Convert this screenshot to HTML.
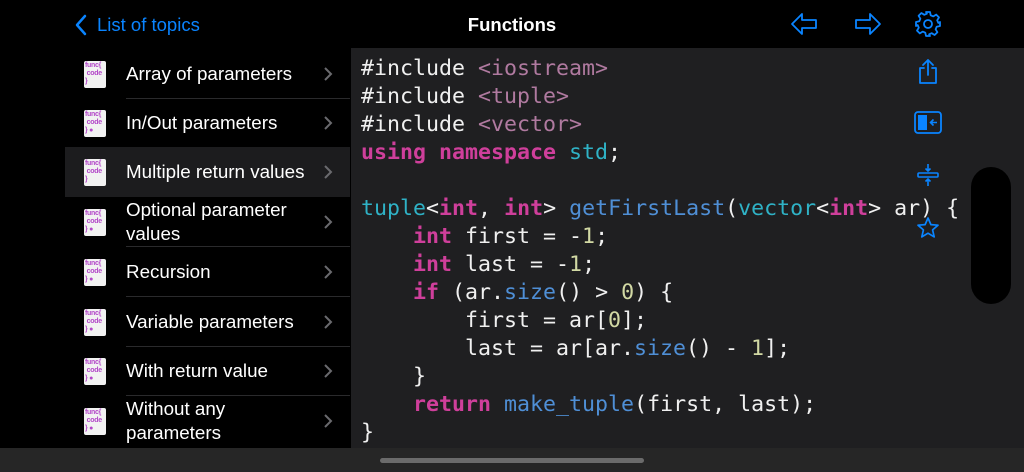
<!DOCTYPE html>
<html><head><meta charset="utf-8"><style>
*{margin:0;padding:0;box-sizing:border-box}
body{width:1024px;height:472px;background:#000;overflow:hidden;position:relative;font-family:"Liberation Sans",sans-serif;color:#fff}
.top{position:absolute;left:0;top:0;width:1024px;height:48px;background:#000}
.title{position:absolute;left:0;width:1024px;top:14px;text-align:center;font-size:18.5px;font-weight:bold}
.back{position:absolute;left:97px;top:14px;font-size:18.5px;color:#0a84ff}
.side{position:absolute;left:0;top:48px;width:350px;height:400px;background:#000}
.row{position:absolute;left:65px;width:285px;height:49.6px}
.row.sel{background:#1c1c1e}
.row .t{position:absolute;left:61px;font-size:18.8px;line-height:24px;top:50%;transform:translateY(-50%);width:183px}
.row .sep{position:absolute;left:61px;right:0;bottom:0;height:1px;background:#2a2a2c}
.row .ch{position:absolute;left:258px;top:50%;margin-top:-8px}
.ic{position:absolute;left:19px;top:50%;margin-top:-13px;width:22px;height:27px;background:#f2f2f2;border-radius:2px;font-size:7px;line-height:8px;font-weight:bold;color:#b347c9;padding:1px 0 0 1px;letter-spacing:-0.3px}
.code{position:absolute;left:351px;top:48px;width:673px;height:400px;background:#1f1f21}
pre{position:absolute;left:361px;top:55px;font-family:"DejaVu Sans Mono","Liberation Mono",monospace;font-size:21.6px;line-height:28px;color:#f0f0f0}
.k{color:#cf3f9b;font-weight:bold}.s{color:#b07aa0}.ty{color:#2fb2c6}.f{color:#4f8fd6}.n{color:#d2d9a4}
.bot{position:absolute;left:0;top:448px;width:1024px;height:24px;background:#262626}
.home{position:absolute;left:380px;top:458px;width:264px;height:5px;border-radius:3px;background:#6b6b6b}
.pill{position:absolute;left:971px;top:167px;width:40px;height:137px;border-radius:20px;background:#000}
</style></head><body>
<div class="top">
<svg style="position:absolute;left:74px;top:14px" width="14" height="22" viewBox="0 0 14 22"><path d="M11 2L3 11l8 9" stroke="#0a84ff" stroke-width="2.5" fill="none" stroke-linecap="round" stroke-linejoin="round"/></svg>
<div class="back">List of topics</div>
<div class="title">Functions</div>
<svg style="position:absolute;left:790px;top:12px" width="28" height="24" viewBox="0 0 28 24"><path d="M2 12L12 2v6h14v8H12v6z" stroke="#0a84ff" stroke-width="1.8" fill="none" stroke-linejoin="round"/></svg>
<svg style="position:absolute;left:854px;top:12px" width="28" height="24" viewBox="0 0 28 24"><path d="M26 12L16 2v6H2v8h14v6z" stroke="#0a84ff" stroke-width="1.8" fill="none" stroke-linejoin="round"/></svg>
<svg style="position:absolute;left:914px;top:10px" width="28" height="28" viewBox="0 0 28 28"><g stroke="#0a84ff" stroke-width="1.8" fill="none"><circle cx="14" cy="14" r="4"/><path d="M12 2h4l.7 3.3 2.6 1.1 2.9-1.8 2.8 2.8-1.8 2.9 1.1 2.6L26 12v4l-3.3.7-1.1 2.6 1.8 2.9-2.8 2.8-2.9-1.8-2.6 1.1L16 26h-4l-.7-3.3-2.6-1.1-2.9 1.8-2.8-2.8 1.8-2.9-1.1-2.6L2 16v-4l3.3-.7 1.1-2.6-1.8-2.9 2.8-2.8 2.9 1.8 2.6-1.1z" stroke-linejoin="round"/></g></svg>
</div>
<div class="side">
<div class="row" style="top:1px"><div class="ic">func{<br>&nbsp;code<br>}</div><div class="t">Array of parameters</div><div class="sep"></div><svg class="ch" width="10" height="16"><path d="M2 2l6 6-6 6" stroke="#6a6a6e" stroke-width="2" fill="none"/></svg></div>
<div class="row" style="top:50px"><div class="ic">func{<br>&nbsp;code<br>} ●</div><div class="t">In/Out parameters</div><svg class="ch" width="10" height="16"><path d="M2 2l6 6-6 6" stroke="#6a6a6e" stroke-width="2" fill="none"/></svg></div>
<div class="row sel" style="top:99px"><div class="ic">func{<br>&nbsp;code<br>}</div><div class="t">Multiple return values</div><svg class="ch" width="10" height="16"><path d="M2 2l6 6-6 6" stroke="#6a6a6e" stroke-width="2" fill="none"/></svg></div>
<div class="row" style="top:149px"><div class="ic">func{<br>&nbsp;code<br>} ●</div><div class="t">Optional parameter values</div><div class="sep"></div><svg class="ch" width="10" height="16"><path d="M2 2l6 6-6 6" stroke="#6a6a6e" stroke-width="2" fill="none"/></svg></div>
<div class="row" style="top:199px"><div class="ic">func{<br>&nbsp;code<br>} ●</div><div class="t">Recursion</div><div class="sep"></div><svg class="ch" width="10" height="16"><path d="M2 2l6 6-6 6" stroke="#6a6a6e" stroke-width="2" fill="none"/></svg></div>
<div class="row" style="top:249px"><div class="ic">func{<br>&nbsp;code<br>} ●</div><div class="t">Variable parameters</div><div class="sep"></div><svg class="ch" width="10" height="16"><path d="M2 2l6 6-6 6" stroke="#6a6a6e" stroke-width="2" fill="none"/></svg></div>
<div class="row" style="top:298px"><div class="ic">func{<br>&nbsp;code<br>} ●</div><div class="t">With return value</div><div class="sep"></div><svg class="ch" width="10" height="16"><path d="M2 2l6 6-6 6" stroke="#6a6a6e" stroke-width="2" fill="none"/></svg></div>
<div class="row" style="top:348px"><div class="ic">func{<br>&nbsp;code<br>} ●</div><div class="t">Without any parameters</div><svg class="ch" width="10" height="16"><path d="M2 2l6 6-6 6" stroke="#6a6a6e" stroke-width="2" fill="none"/></svg></div>
</div>
<div class="code"></div>
<pre>#include <span class="s">&lt;iostream&gt;</span>
#include <span class="s">&lt;tuple&gt;</span>
#include <span class="s">&lt;vector&gt;</span>
<span class="k">using namespace</span> <span class="ty">std</span>;

<span class="ty">tuple</span>&lt;<span class="k">int</span>, <span class="k">int</span>&gt; <span class="f">getFirstLast</span>(<span class="ty">vector</span>&lt;<span class="k">int</span>&gt; ar) {
    <span class="k">int</span> first = -<span class="n">1</span>;
    <span class="k">int</span> last = -<span class="n">1</span>;
    <span class="k">if</span> (ar.<span class="f">size</span>() &gt; <span class="n">0</span>) {
        first = ar[<span class="n">0</span>];
        last = ar[ar.<span class="f">size</span>() - <span class="n">1</span>];
    }
    <span class="k">return</span> <span class="f">make_tuple</span>(first, last);
}</pre>
<svg style="position:absolute;left:916px;top:57px" width="24" height="28" viewBox="0 0 24 28"><g stroke="#0a84ff" stroke-width="1.8" fill="none" stroke-linecap="round" stroke-linejoin="round"><path d="M8 11H4v15h16V11h-4"/><path d="M12 18V3M7 8l5-5 5 5"/></g></svg>
<svg style="position:absolute;left:914px;top:111px" width="28" height="24" viewBox="0 0 28 24"><rect x="1" y="1" width="26" height="21" rx="3" stroke="#0a84ff" stroke-width="1.8" fill="none"/><rect x="4" y="4" width="9" height="15" fill="#0a84ff"/><path d="M23 11.5h-6M19.5 8.5l-3 3 3 3" stroke="#0a84ff" stroke-width="1.6" fill="none"/></svg>
<svg style="position:absolute;left:916px;top:163px" width="24" height="24" viewBox="0 0 24 24"><g stroke="#0a84ff" stroke-width="1.6" fill="none"><rect x="2" y="10" width="20" height="4" rx="1"/><path d="M12 1v7M9.5 5.5L12 8l2.5-2.5M12 23v-7M9.5 18.5L12 16l2.5 2.5"/></g></svg>
<svg style="position:absolute;left:916px;top:216px" width="24" height="24" viewBox="0 0 24 24"><path d="M12 2l2.9 6.6 7.1.6-5.4 4.7 1.6 7-6.2-3.7-6.2 3.7 1.6-7L2 9.2l7.1-.6z" stroke="#0a84ff" stroke-width="1.7" fill="none" stroke-linejoin="round"/></svg>
<div class="pill"></div>
<div class="bot"></div><div class="home"></div>
</body></html>
